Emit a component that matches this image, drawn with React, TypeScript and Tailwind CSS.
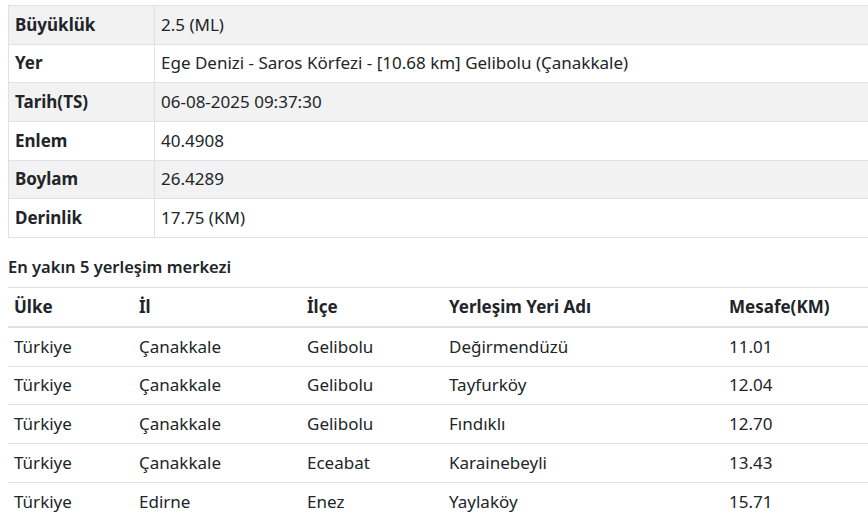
const details: [string, string][] = [
  ['Büyüklük', '2.5 (ML)'],
  ['Yer', 'Ege Denizi - Saros Körfezi - [10.68 km] Gelibolu (Çanakkale)'],
  ['Tarih(TS)', '06-08-2025 09:37:30'],
  ['Enlem', '40.4908'],
  ['Boylam', '26.4289'],
  ['Derinlik', '17.75 (KM)'],
];

const places = [
  ['Türkiye', 'Çanakkale', 'Gelibolu', 'Değirmendüzü', '11.01'],
  ['Türkiye', 'Çanakkale', 'Gelibolu', 'Tayfurköy', '12.04'],
  ['Türkiye', 'Çanakkale', 'Gelibolu', 'Fındıklı', '12.70'],
  ['Türkiye', 'Çanakkale', 'Eceabat', 'Karainebeyli', '13.43'],
  ['Türkiye', 'Edirne', 'Enez', 'Yaylaköy', '15.71'],
];

const headers = ['Ülke', 'İl', 'İlçe', 'Yerleşim Yeri Adı', 'Mesafe(KM)'];
const colWidths = ['w-[125px]', 'w-[168px]', 'w-[142px]', 'w-[280px]', 'w-[229px]'];

export default function App() {
  return (
    <div className="h-[529px] w-[868px] overflow-hidden bg-white font-['Noto_Sans',sans-serif] text-[17px] leading-[24px] text-[#212529]">
      <div className="w-[960px] px-2 pt-[5px]">
        <table className="w-full border-collapse">
          <tbody>
            {details.map(([label, value], i) => (
              <tr key={label} className={i % 2 === 0 ? 'bg-[#f2f2f2]' : 'bg-white'}>
                <th className="h-[38.67px] w-[146px] border border-[#dee2e6] px-[6px] py-0 text-left font-bold">
                  {label}
                </th>
                <td className="h-[38.67px] border border-[#dee2e6] px-[6px] py-0">{value}</td>
              </tr>
            ))}
          </tbody>
        </table>

        <h6 className="mt-[17px] mb-[8px] text-[16.5px] leading-[24px] font-semibold">En yakın 5 yerleşim merkezi</h6>

        <table className="w-[944px] table-fixed border-collapse">
          <thead>
            <tr className="border-t border-[#dee2e6]">
              {headers.map((h, i) => (
                <th key={h} className={`${colWidths[i]} h-[40px] border-b-2 border-[#dee2e6] px-[6px] py-0 text-left font-bold`}>
                  {h}
                </th>
              ))}
            </tr>
          </thead>
          <tbody>
            {places.map((row, r) => (
              <tr key={r} className={r < places.length - 1 ? 'border-b border-[#dee2e6]' : ''}>
                {row.map((cell, c) => (
                  <td key={c} className="h-[38.67px] px-[6px] py-0">
                    {cell}
                  </td>
                ))}
              </tr>
            ))}
          </tbody>
        </table>
      </div>
    </div>
  );
}
